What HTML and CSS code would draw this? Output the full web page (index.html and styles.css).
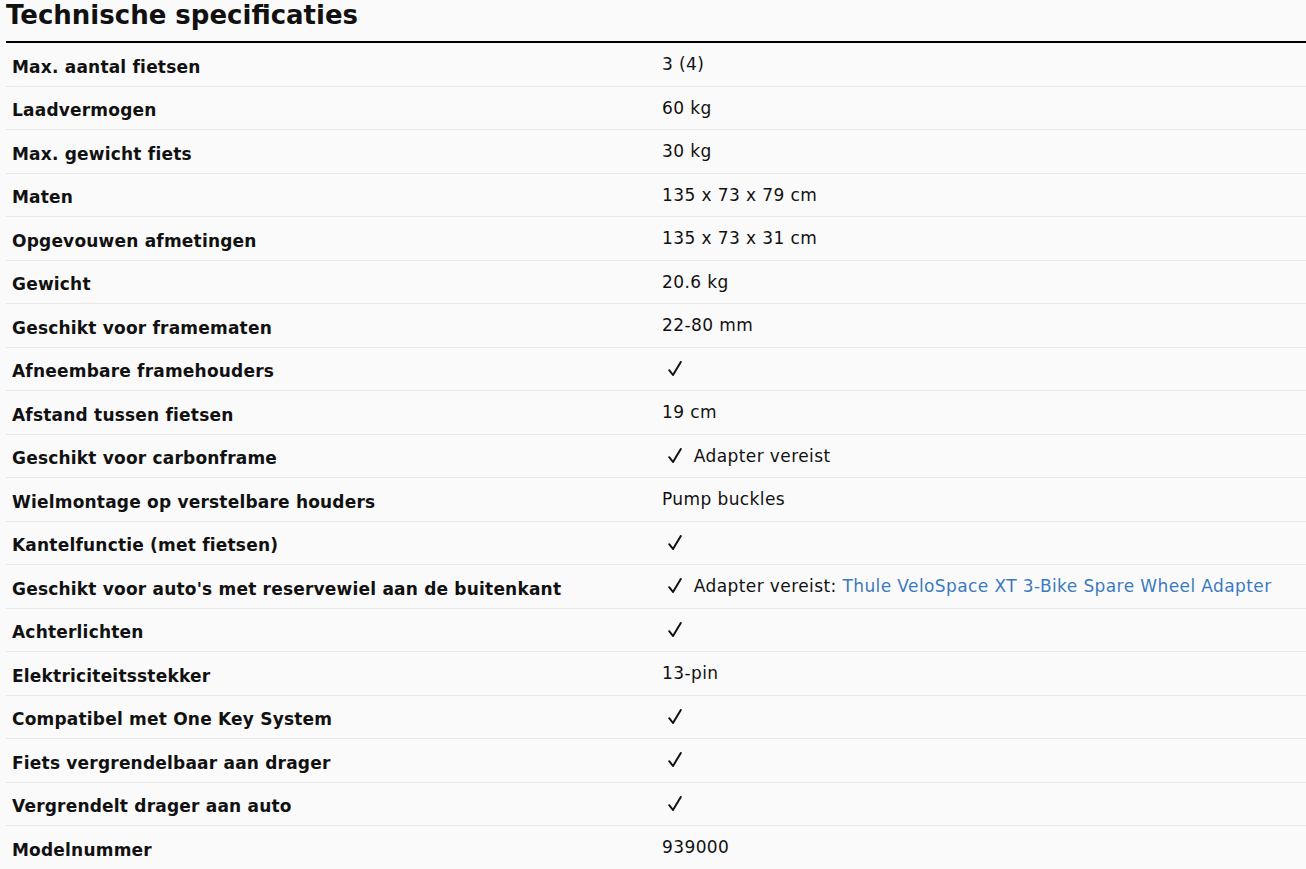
FILE: index.html
```html
<!DOCTYPE html>
<html lang="nl">
<head>
<meta charset="utf-8">
<title>Technische specificaties</title>
<link rel="stylesheet" href="styles.css">
</head>
<body>
<section class="specs">
  <h2 class="specs-title">Technische specificaties</h2>
  <table class="specs-table">
    <tbody>
      <tr><th>Max. aantal fietsen</th><td>3 (4)</td></tr>
      <tr><th>Laadvermogen</th><td>60 kg</td></tr>
      <tr><th>Max. gewicht fiets</th><td>30 kg</td></tr>
      <tr><th>Maten</th><td>135 x 73 x 79 cm</td></tr>
      <tr><th>Opgevouwen afmetingen</th><td>135 x 73 x 31 cm</td></tr>
      <tr><th>Gewicht</th><td>20.6 kg</td></tr>
      <tr><th>Geschikt voor framematen</th><td>22-80 mm</td></tr>
      <tr><th>Afneembare framehouders</th><td><svg class="check" viewBox="0 0 14 15" aria-label="✓"><path d="M1.2 9.2 L5 14 L12.8 1"/></svg></td></tr>
      <tr><th>Afstand tussen fietsen</th><td>19 cm</td></tr>
      <tr><th>Geschikt voor carbonframe</th><td><svg class="check" viewBox="0 0 14 15" aria-label="✓"><path d="M1.2 9.2 L5 14 L12.8 1"/></svg> Adapter vereist</td></tr>
      <tr><th>Wielmontage op verstelbare houders</th><td>Pump buckles</td></tr>
      <tr><th>Kantelfunctie (met fietsen)</th><td><svg class="check" viewBox="0 0 14 15" aria-label="✓"><path d="M1.2 9.2 L5 14 L12.8 1"/></svg></td></tr>
      <tr><th>Geschikt voor auto's met reservewiel aan de buitenkant</th><td><svg class="check" viewBox="0 0 14 15" aria-label="✓"><path d="M1.2 9.2 L5 14 L12.8 1"/></svg> Adapter vereist: <a class="link" href="#">Thule VeloSpace XT 3-Bike Spare Wheel Adapter</a></td></tr>
      <tr><th>Achterlichten</th><td><svg class="check" viewBox="0 0 14 15" aria-label="✓"><path d="M1.2 9.2 L5 14 L12.8 1"/></svg></td></tr>
      <tr><th>Elektriciteitsstekker</th><td>13-pin</td></tr>
      <tr><th>Compatibel met One Key System</th><td><svg class="check" viewBox="0 0 14 15" aria-label="✓"><path d="M1.2 9.2 L5 14 L12.8 1"/></svg></td></tr>
      <tr><th>Fiets vergrendelbaar aan drager</th><td><svg class="check" viewBox="0 0 14 15" aria-label="✓"><path d="M1.2 9.2 L5 14 L12.8 1"/></svg></td></tr>
      <tr><th>Vergrendelt drager aan auto</th><td><svg class="check" viewBox="0 0 14 15" aria-label="✓"><path d="M1.2 9.2 L5 14 L12.8 1"/></svg></td></tr>
      <tr><th>Modelnummer</th><td>939000</td></tr>
    </tbody>
  </table>
</section>
</body>
</html>
```
FILE: styles.css
```css
html, body {
  margin: 0;
  padding: 0;
  background: #fafafa;
}
body {
  font-family: "DejaVu Sans", Verdana, sans-serif;
  color: #111;
  overflow: hidden;
}
.specs {
  margin-left: 6px;
}
.specs-title {
  margin: 0;
  font-size: 26px;
  font-weight: bold;
  line-height: 30px;
  padding-bottom: 11px;
  border-bottom: 2px solid #000;
  color: #111;
}
.specs-table {
  width: 100%;
  border-collapse: collapse;
  table-layout: fixed;
}
.specs-table th,
.specs-table td {
  width: 50%;
  text-align: left;
  border-bottom: 1px solid #e8e8e8;
  line-height: 24.5px;
}
.specs-table th {
  font-weight: bold;
  font-size: 17px;
  letter-spacing: 0.2px;
  padding: 11.5px 6px 6.5px;
  vertical-align: top;
}
.specs-table td {
  font-size: 17px;
  letter-spacing: 0.4px;
  padding: 9px 6px 9px;
  vertical-align: top;
}
.check {
  display: inline-block;
  width: 14px;
  height: 15px;
  margin-left: 6px;
  margin-right: 6px;
  vertical-align: -1px;
  fill: none;
  stroke: #111;
  stroke-width: 2;
  stroke-linecap: round;
  stroke-linejoin: round;
}
.link {
  color: #3b7bbf;
  text-decoration: none;
}
```
